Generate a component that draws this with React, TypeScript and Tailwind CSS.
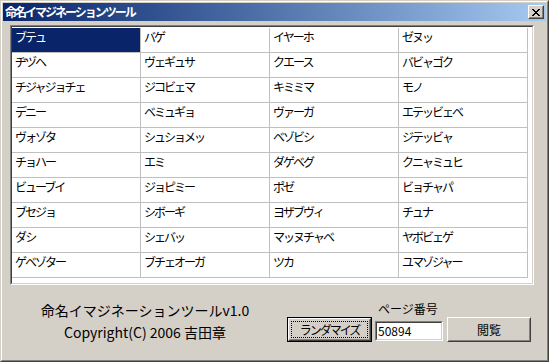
const rows: string[][] = [
  ["ブテュ", "バゲ", "イヤーホ", "ゼヌッ"],
  ["ヂヅヘ", "ヴェギュサ", "クエース", "バビャゴク"],
  ["チジャジョチェ", "ジコビェマ", "キミミマ", "モノ"],
  ["デニー", "ベミュギョ", "ヴァーガ", "エテッビェベ"],
  ["ヴォゾタ", "シュショメッ", "ベゾビシ", "ジテッビャ"],
  ["チョハー", "エミ", "ダゲベグ", "クニャミュヒ"],
  ["ビューブイ", "ジョピミー", "ポゼ", "ビョチャパ"],
  ["ブセジョ", "シボーギ", "ヨザブヴィ", "チュナ"],
  ["ダシ", "シェバッ", "マッヌチャベ", "ヤボビェゲ"],
  ["ゲベゾター", "ブチェオーガ", "ツカ", "ユマゾジャー"],
];

const font = "font-['Noto_Sans_CJK_JP','Noto_Sans',sans-serif]";

function CloseButton() {
  return (
    <div className="h-[14px] w-[16px] border border-t-white border-l-white border-r-[#404040] border-b-[#404040] bg-[#d4d0c8]">
      <div className="flex h-full w-full items-center justify-center border border-t-[#d4d0c8] border-l-[#d4d0c8] border-r-[#808080] border-b-[#808080]">
        <svg width="8" height="7" viewBox="0 0 8 7" shapeRendering="crispEdges">
          <path
            d="M0 0h2v1H0zM6 0h2v1H6zM1 1h2v1H1zM5 1h2v1H5zM2 2h4v1H2zM3 3h2v1H3zM2 4h4v1H2zM1 5h2v1H1zM5 5h2v1H5zM0 6h2v1H0zM6 6h2v1H6z"
            fill="#000"
          />
        </svg>
      </div>
    </div>
  );
}

export default function App() {
  return (
    <div className={`h-[362px] w-[549px] bg-[#d4d0c8] ${font}`}>
      <div className="flex h-full w-full flex-col border border-t-[#d4d0c8] border-l-[#d4d0c8] border-r-[#404040] border-b-[#404040]">
        <div className="flex flex-1 flex-col border border-t-white border-l-white border-r-[#808080] border-b-[#808080] p-[1px]">
          {/* title bar */}
          <div className="flex h-[18px] items-center justify-between bg-gradient-to-r from-[#0a246a] to-[#a6caf0] pl-[2px] pr-[2px]">
            <span className="text-[12px] leading-[14px] font-bold tracking-[-2px] text-white">
              命名イマジネーションツール
            </span>
            <CloseButton />
          </div>

          {/* name grid */}
          <div className="ml-[7px] mt-[4px] h-[260px] w-[524px] border border-t-[#808080] border-l-[#808080] border-r-white border-b-white">
            <div className="h-full w-full border border-t-[#404040] border-l-[#404040] border-r-[#d4d0c8] border-b-[#d4d0c8] bg-white pt-[1px]">
              <div className="grid grid-cols-[repeat(4,129px)]">
                {rows.map((row, r) =>
                  row.map((name, c) => {
                    const selected = r === 0 && c === 0;
                    return (
                      <div
                        key={`${r}-${c}`}
                        className={
                          selected
                            ? "h-[25px] border-r border-b border-[#c0c0c0] bg-[#0a246a] pl-[3px] pt-[2px] text-[12px] leading-[13px] tracking-[-2px] text-white"
                            : "h-[25px] border-r border-b border-[#c0c0c0] pl-[3px] pt-[2px] text-[12px] leading-[13px] tracking-[-2px] text-black"
                        }
                      >
                        {name}
                      </div>
                    );
                  }),
                )}
              </div>
            </div>
          </div>

          {/* footer */}
          <div className="flex">
            <div className="ml-[7px] mt-[14px] w-[270px] text-center text-[14px] leading-[22px] text-black">
              <div>命名イマジネーションツールv1.0</div>
              <div>Copyright(C) 2006 吉田章</div>
            </div>
            <div className="ml-[7px] mt-[16px] flex flex-col">
              <div className="pr-[2px] text-center text-[12px] leading-[15px] text-black">
                ページ番号
              </div>
              <div className="mt-[1px] flex items-start">
                <div className="h-[25px] w-[85px] border border-black">
                  <div className="h-full w-full border border-t-white border-l-white border-r-[#404040] border-b-[#404040]">
                    <div className="flex h-full w-full items-center justify-center border border-t-[#d4d0c8] border-l-[#d4d0c8] border-r-[#808080] border-b-[#808080] p-[1px]">
                      <div className="flex h-full w-full items-center justify-center border border-dotted border-black text-[12px] leading-[14px] tracking-[-2px] text-black">
                        ランダマイズ
                      </div>
                    </div>
                  </div>
                </div>
                <div className="ml-[3px] mt-[4px] h-[20px] w-[68px] border border-t-[#808080] border-l-[#808080] border-r-white border-b-white">
                  <div className="flex h-full w-full items-center border border-t-[#404040] border-l-[#404040] border-r-[#d4d0c8] border-b-[#d4d0c8] bg-white pl-[1px] text-[12px] leading-[14px] text-black">
                    50894
                  </div>
                </div>
                <div className="ml-[4px] h-[25px] w-[84px] border border-t-white border-l-white border-r-[#404040] border-b-[#404040]">
                  <div className="flex h-full w-full items-center justify-center border border-t-[#d4d0c8] border-l-[#d4d0c8] border-r-[#808080] border-b-[#808080] text-[12px] leading-[14px] text-black">
                    閲覧
                  </div>
                </div>
              </div>
            </div>
          </div>
        </div>
      </div>
    </div>
  );
}
